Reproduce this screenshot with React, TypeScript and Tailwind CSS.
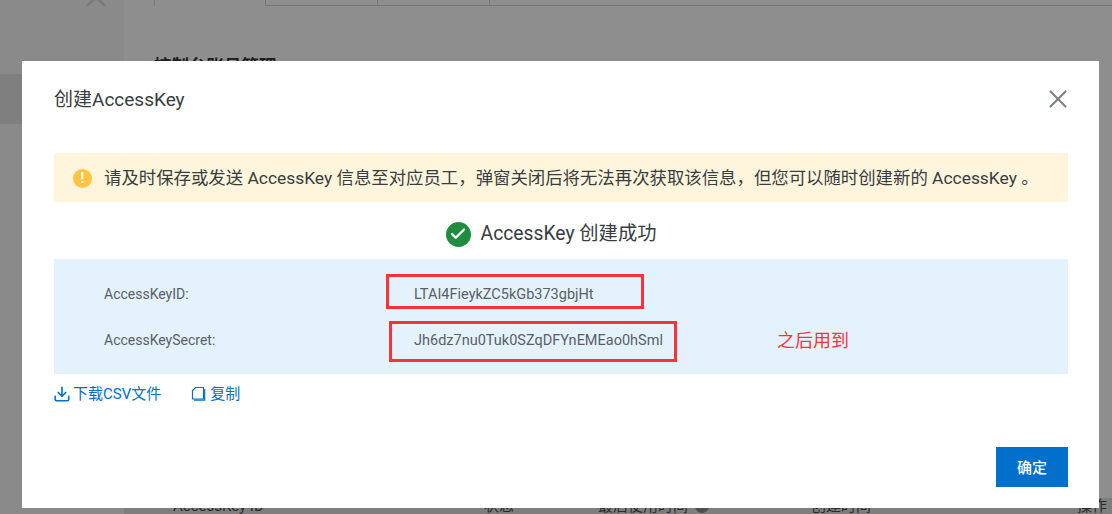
import React from 'react';
import { X, Download, Check } from 'lucide-react';

const font = "font-['Roboto','Noto_Sans_CJK_SC',sans-serif]";

const App: React.FC = () => {
  return (
    <div className={`relative w-[1112px] h-[514px] overflow-hidden bg-[#8e8e8e] ${font}`}>
      {/* Page behind the overlay */}
      <div className="flex h-full">
        <div className="w-[124px] shrink-0 h-full bg-[#8a8a8a] flex flex-col">
          <div className="h-[74px] flex justify-end pr-[12px]">
            <X size={32} strokeWidth={1.5} className="text-[#777777] -mt-[19px]" />
          </div>
          <div className="h-[50px] bg-[#7f7f7f]"></div>
        </div>
        <div className="flex-1 min-w-0 flex flex-col">
          <div className="flex h-[6px] pl-[30px]">
            <div className="w-[111px] border-l border-[#777777]"></div>
            <div className="w-[112px] border-l border-b border-[#777777]"></div>
            <div className="w-[112px] border-l border-b border-[#777777]"></div>
            <div className="flex-1 border-l border-b border-[#777777]"></div>
          </div>
          <div className="mt-[49px] pl-[30px] text-[17.5px] leading-[22px] font-bold text-[#1c1c1c] whitespace-nowrap">控制台账号管理</div>
          <div className="mt-auto flex items-center bg-[#7e7e7e] text-[15px] leading-[16px] text-[#2b2b2b] pl-[49px] whitespace-nowrap">
            <span className="w-[311px]">AccessKey ID</span>
            <span className="w-[114px]">状态</span>
            <span className="w-[213px] flex items-center">
              最后使用时间
              <span className="ml-[7px] w-[14px] h-[14px] rounded-full bg-[#4f4f4f]"></span>
            </span>
            <span className="w-[266px]">创建时间</span>
            <span>操作</span>
          </div>
        </div>
      </div>

      {/* Dialog */}
      <div className="absolute left-[22px] top-[61px] w-[1077px] h-[447px] bg-white pl-[32px] pr-[31px] flex flex-col">
        <div className="flex items-center justify-between h-[76px]">
          <h2 className="pt-[2px] text-[19px] font-normal text-[#373d41]">创建AccessKey</h2>
          <X size={30} strokeWidth={1.7} className="text-[#7d8488] -mr-[5px]" />
        </div>

        <div className="mt-[16px] h-[49px] pt-[1px] bg-[#fff5dc] flex items-center pl-[19px] text-[17.4px] text-[#373d41] whitespace-nowrap">
          <span className="w-[19px] h-[19px] rounded-full bg-[#ffc440] text-white flex items-center justify-center text-[14px] font-bold mr-[12px]">!</span>
          请及时保存或发送 AccessKey 信息至对应员工，弹窗关闭后将无法再次获取该信息，但您可以随时创建新的 AccessKey 。
        </div>

        <div className="h-[57px] pt-[7px] pr-[20px] flex items-center justify-center text-[19.3px] text-[#373d41]">
          <span className="w-[25px] h-[25px] rounded-full bg-[#1e8e3e] flex items-center justify-center mr-[10px]">
            <Check size={18} strokeWidth={3.2} className="text-white" />
          </span>
          <span className="pt-[1px]">AccessKey 创建成功</span>
        </div>

        <div className="h-[115px] pt-[2px] bg-[#e3f2fd] flex flex-col justify-center gap-[22px] pl-[50px] text-[14.5px] text-[#5a5f66]">
          <div className="flex items-center h-[24px]">
            <span className="w-[310px] text-[14px]">AccessKeyID:</span>
            <span className="relative">
              LTAI4FieykZC5kGb373gbjHt
              <span className="absolute left-[-28px] top-[-10px] w-[258px] h-[35px] border-[3px] border-[#fb3339]"></span>
            </span>
          </div>
          <div className="flex items-center h-[24px]">
            <span className="w-[310px] text-[14px]">AccessKeySecret:</span>
            <span className="relative">
              Jh6dz7nu0Tuk0SZqDFYnEMEao0hSml
              <span className="absolute left-[-25px] top-[-9px] w-[288px] h-[41px] border-[3px] border-[#fb3339]"></span>
            </span>
            <span className="ml-[114px] text-[18px] text-[#fb3339]">之后用到</span>
          </div>
        </div>

        <div className="mt-[10px] flex items-center text-[15px] text-[#0070cc] h-[20px]">
          <Download size={18} strokeWidth={2.2} className="-ml-[1px] mr-[2px]" />
          <span>下载CSV文件</span>
          <svg width="15" height="16" viewBox="0 0 15 16" fill="none" stroke="currentColor" strokeWidth="1.2" strokeLinejoin="miter" className="ml-[30px] mr-[4px]">
            <path d="M4.5 1.5h8v11.5H1.5V4.5z" />
            <path d="M13.7 3v11.2H3" />
          </svg>
          <span>复制</span>
        </div>

        <div className="mt-auto mb-[21px] flex justify-end">
          <button className="w-[72px] h-[40px] pt-[2px] bg-[#0070cc] text-white text-[15px] font-medium">确定</button>
        </div>
      </div>
    </div>
  );
};

export default App;
